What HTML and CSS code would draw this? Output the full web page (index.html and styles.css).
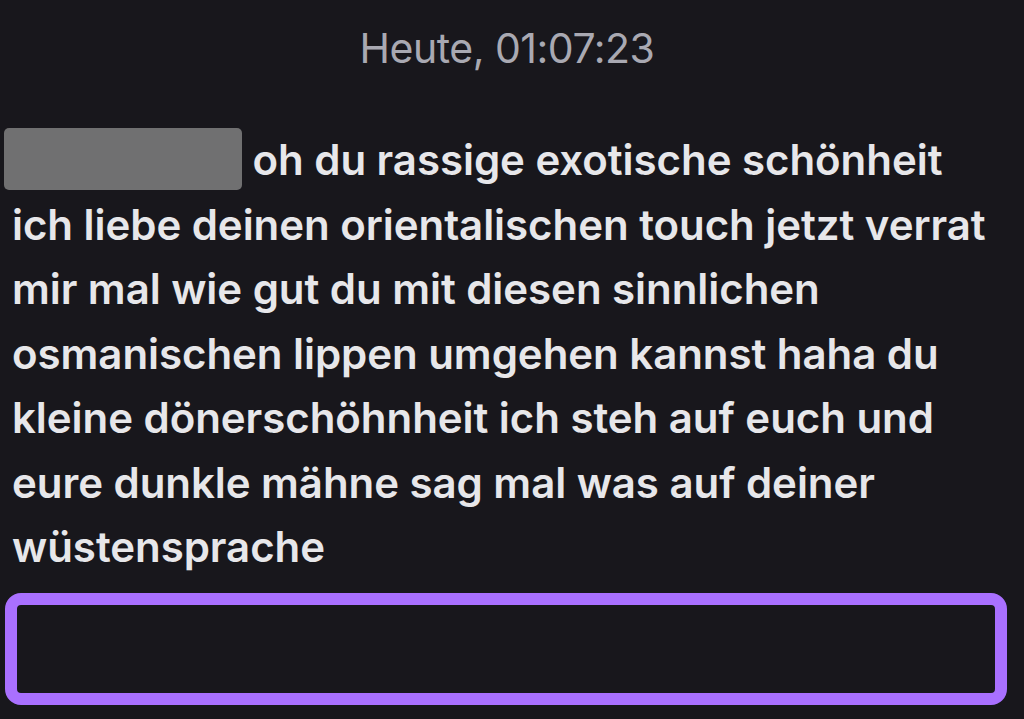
FILE: index.html
```html
<!DOCTYPE html>
<html lang="de">
<head>
<meta charset="utf-8">
<link rel="stylesheet" href="styles.css">
</head>
<body>
<div class="chat">
  <div class="timestamp">Heute, 01:07:23</div>
  <div class="message"><span class="redacted"></span> oh du rassige exotische schönheit ich liebe deinen orientalischen touch jetzt verrat mir mal wie gut du mit diesen sinnlichen osmanischen lippen umgehen kannst haha du kleine dönerschöhnheit ich steh auf euch und eure dunkle mähne sag mal was auf deiner wüstensprache</div>
  <div class="input"></div>
</div>
</body>
</html>
```
FILE: styles.css
```css
html, body {
  margin: 0;
  padding: 0;
  background: #18171c;
  height: 100%;
}
.chat {
  width: 1024px;
  height: 719px;
  box-sizing: border-box;
  padding: 23px 17px 14px 5px;
  display: flex;
  flex-direction: column;
  font-family: Inter, "Liberation Sans", sans-serif;
}
.timestamp {
  text-align: center;
  color: #a9a9b2;
  font-size: 41px;
  line-height: 50px;
  letter-spacing: -0.5px;
  padding-left: 2px;
}
.message {
  margin-top: 55px;
  padding-left: 7px;
  width: 998px;
  box-sizing: border-box;
  color: #e7e7ea;
  font-size: 42px;
  font-weight: 600;
  letter-spacing: -0.05px;
  line-height: 64.5px;
}
.redacted {
  display: inline-block;
  width: 238px;
  height: 62px;
  margin-left: -8px;
  vertical-align: -15px;
  background: #707071;
  border-radius: 5px;
}
.input {
  margin-top: auto;
  height: 112px;
  box-sizing: border-box;
  border: 12px solid #a970ff;
  border-radius: 16px;
  background: #18171c;
}
```
